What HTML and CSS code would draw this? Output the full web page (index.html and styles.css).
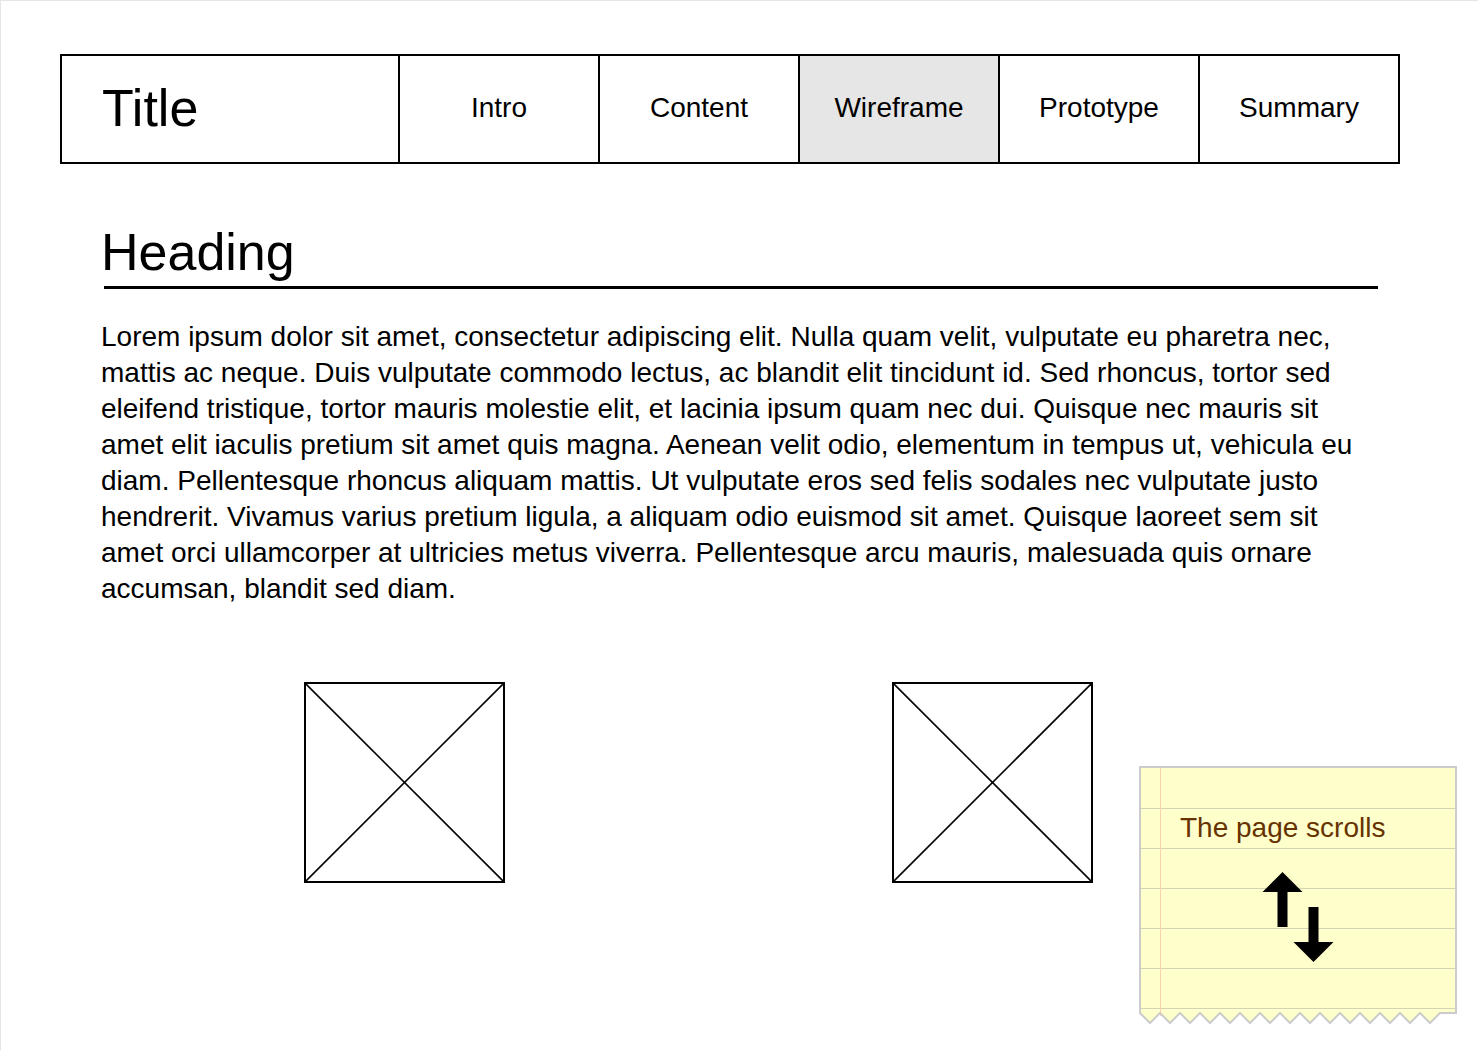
FILE: index.html
```html
<!DOCTYPE html>
<html lang="en">
<head>
<meta charset="utf-8">
<title>Wireframe</title>
<link rel="stylesheet" href="styles.css">
</head>
<body>
<div class="page">
  <nav class="nav">
    <div class="nav-title">Title</div>
    <div class="nav-item">Intro</div>
    <div class="nav-item">Content</div>
    <div class="nav-item nav-item-active">Wireframe</div>
    <div class="nav-item">Prototype</div>
    <div class="nav-item">Summary</div>
  </nav>
  <main class="main">
    <h1 class="heading">Heading</h1>
    <p class="text">Lorem ipsum dolor sit amet, consectetur adipiscing elit. Nulla quam velit, vulputate eu pharetra nec, mattis ac neque. Duis vulputate commodo lectus, ac blandit elit tincidunt id. Sed rhoncus, tortor sed eleifend tristique, tortor mauris molestie elit, et lacinia ipsum quam nec dui. Quisque nec mauris sit amet elit iaculis pretium sit amet quis magna. Aenean velit odio, elementum in tempus ut, vehicula eu diam. Pellentesque rhoncus aliquam mattis. Ut vulputate eros sed felis sodales nec vulputate justo hendrerit. Vivamus varius pretium ligula, a aliquam odio euismod sit amet. Quisque laoreet sem sit amet orci ullamcorper at ultricies metus viverra. Pellentesque arcu mauris, malesuada quis ornare accumsan, blandit sed diam.</p>
    <div class="figures">
      <div class="placeholder">
        <svg class="placeholder-x" viewBox="0 0 197 197" preserveAspectRatio="none">
          <line x1="0" y1="0" x2="197" y2="197"/>
          <line x1="197" y1="0" x2="0" y2="197"/>
        </svg>
      </div>
      <div class="placeholder">
        <svg class="placeholder-x" viewBox="0 0 197 197" preserveAspectRatio="none">
          <line x1="0" y1="0" x2="197" y2="197"/>
          <line x1="197" y1="0" x2="0" y2="197"/>
        </svg>
      </div>
    </div>
  </main>
  <aside class="note">
    <svg class="note-paper" width="320" height="262" viewBox="0 0 320 262">
      <polygon class="note-fill" points="1,1 317,1 317,247 301,247 291,257 281,247 271,257 261,247 251,257 241,247 231,257 221,247 211,257 201,247 191,257 181,247 171,257 161,247 151,257 141,247 131,257 121,247 111,257 101,247 91,257 81,247 71,257 61,247 51,257 41,247 31,257 21,247 11,257 1,247"/>
      <g class="note-lines">
        <line x1="2" y1="42.5" x2="316" y2="42.5"/>
        <line x1="2" y1="82.5" x2="316" y2="82.5"/>
        <line x1="2" y1="122.5" x2="316" y2="122.5"/>
        <line x1="2" y1="162.5" x2="316" y2="162.5"/>
        <line x1="2" y1="202.5" x2="316" y2="202.5"/>
        <line x1="2" y1="242.5" x2="316" y2="242.5"/>
      </g>
      <line class="note-margin" x1="21.5" y1="2" x2="21.5" y2="250"/>
      <polygon class="note-edge" points="1,1 317,1 317,247 301,247 291,257 281,247 271,257 261,247 251,257 241,247 231,257 221,247 211,257 201,247 191,257 181,247 171,257 161,247 151,257 141,247 131,257 121,247 111,257 101,247 91,257 81,247 71,257 61,247 51,257 41,247 31,257 21,247 11,257 1,247"/>
      <polygon class="note-arrow" points="143.5,106 163.5,126 148.5,126 148.5,161 138.5,161 138.5,126 123.5,126"/>
      <polygon class="note-arrow" points="169.5,141 179.5,141 179.5,176 194.5,176 174.5,196 154.5,176 169.5,176"/>
    </svg>
    <div class="note-text">The page scrolls</div>
  </aside>
</div>
</body>
</html>
```

FILE: styles.css
```css
html, body {
  margin: 0;
  padding: 0;
  background: #ffffff;
}

body {
  font-family: "Liberation Sans", Helvetica, Arial, sans-serif;
  color: #000000;
}

.page {
  position: relative;
  box-sizing: border-box;
  min-height: 100vh;
  border-top: 1px solid #e5e5e5;
  border-left: 1px solid #e5e5e5;
  padding-top: 53px;
}

.nav {
  display: flex;
  box-sizing: border-box;
  width: 1340px;
  height: 110px;
  margin-left: 59px;
  border: 2px solid #000000;
}

.nav-title {
  flex: 1;
  display: flex;
  align-items: center;
  padding: 0 0 3px 40px;
  font-size: 52px;
  line-height: 60px;
}

.nav-item {
  box-sizing: border-box;
  width: 200px;
  display: flex;
  align-items: center;
  justify-content: center;
  padding-bottom: 3px;
  border-left: 2px solid #000000;
  font-size: 28px;
  line-height: 32px;
}

.nav-item-active {
  background: #e6e6e6;
}

.main {
  padding-left: 100px;
}

.heading {
  box-sizing: border-box;
  width: 1274px;
  margin: 58px 0 0 3px;
  padding-bottom: 4px;
  border-bottom: 3px solid #000000;
  text-indent: -3px;
  font-size: 52px;
  line-height: 60px;
  font-weight: normal;
}

.text {
  width: 1274px;
  margin: 30px 0 0 0;
  font-size: 28px;
  line-height: 36px;
}

.figures {
  display: flex;
  gap: 387px;
  margin-top: 75px;
  padding-left: 203px;
}

.placeholder {
  box-sizing: border-box;
  width: 201px;
  height: 201px;
  border: 2px solid #000000;
}

.placeholder-x {
  display: block;
  width: 197px;
  height: 197px;
}

.placeholder-x line {
  stroke: #000000;
  stroke-width: 1.6;
}

.note {
  position: absolute;
  left: 1138px;
  top: 765px;
  width: 320px;
  height: 262px;
}

.note-paper {
  position: absolute;
  left: 0;
  top: 0;
  display: block;
}

.note-fill {
  fill: #ffffcc;
}

.note-lines line {
  stroke: #d4d4b4;
  stroke-width: 1;
}

.note-margin {
  stroke: #ffd0b0;
  stroke-width: 1;
}

.note-edge {
  fill: none;
  stroke: #cccccc;
  stroke-width: 2;
  stroke-linejoin: miter;
}

.note-arrow {
  fill: #000000;
}

.note-text {
  position: absolute;
  left: 41px;
  top: 46px;
  font-size: 28px;
  line-height: 32px;
  color: #663300;
  white-space: nowrap;
}
```
